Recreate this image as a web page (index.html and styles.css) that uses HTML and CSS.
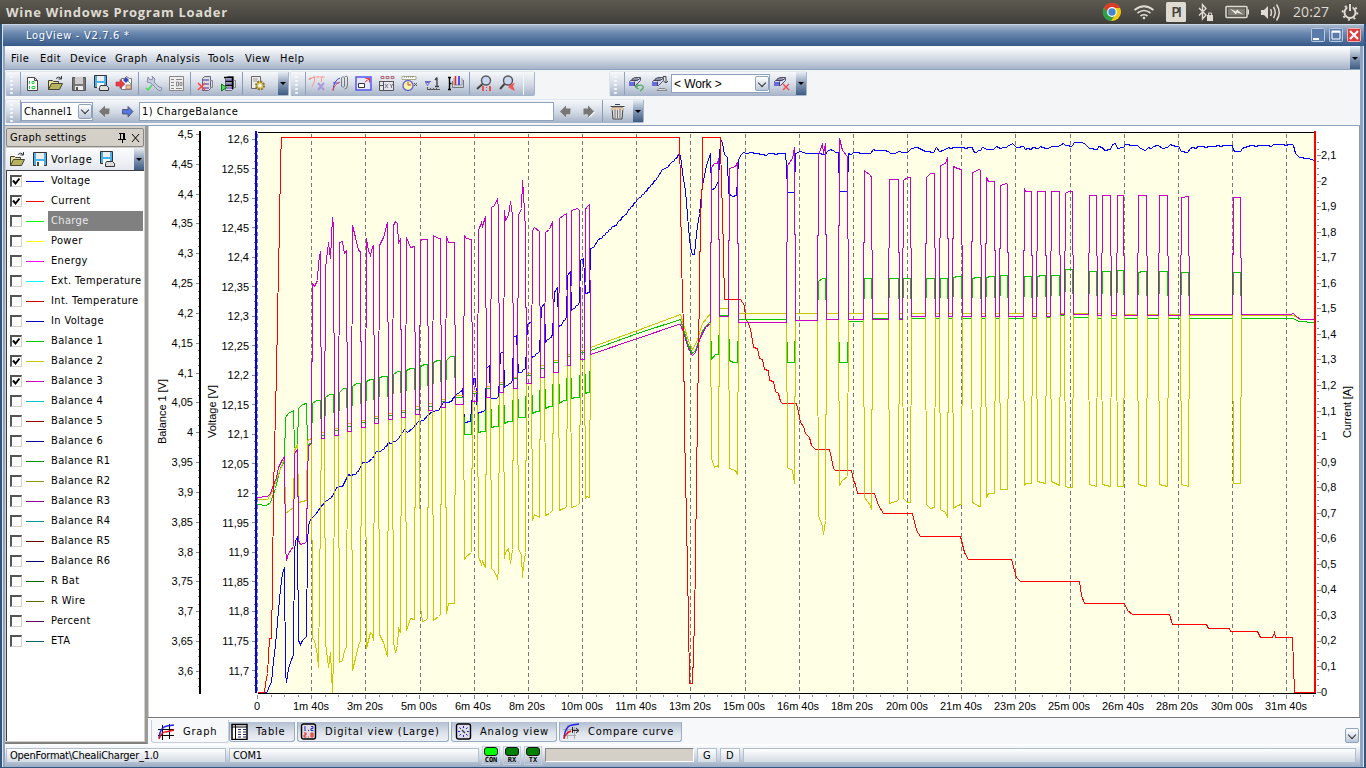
FILE: index.html
```html
<!DOCTYPE html>
<html lang="en">
<head>
<meta charset="utf-8">
<title>LogView</title>
<link rel="stylesheet" href="styles.css">
</head>
<body>
<svg class="defs" width="0" height="0">
  <symbol id="i-new" viewBox="0 0 17 17"><path d="M3.500 2.500h7l3 3v10h-10z" fill="#fff" stroke="#444"/><path d="M10.500 2.500v3h3" fill="none" stroke="#444"/><path d="M5.500 6v3M8 6.500h2v2h-2zM5.500 11v3M8 11.500h3v2h-3z" fill="none" stroke="#3c4"/></symbol>
  <symbol id="i-open" viewBox="0 0 17 17"><path d="M1.500 14.500v-9h4l1 1h5v2" fill="#e9dfa0" stroke="#443"/><path d="M1.500 14.500l3-6h11l-3 6z" fill="#b8b45e" stroke="#443"/><path d="M9 3.500q3-3 5 0M14.500 1v3h-3" fill="none" stroke="#333"/></symbol>
  <symbol id="i-saveg" viewBox="0 0 17 17"><path d="M2.500 2.500h13v13h-13z" fill="#777" stroke="#555"/><path d="M5 2h8v7H5z" fill="#ccc"/><path d="M5 11h8v4H5z" fill="#eee"/><path d="M6 12h2v3H6z" fill="#555"/></symbol>
  <symbol id="i-save" viewBox="0 0 17 17"><path d="M1.500 1.500h13v13h-13z" fill="#49b1ec" stroke="#333"/><path d="M4 2h8v6H4z" fill="#eee"/><path d="M4 10h8v5H4z" fill="#fff"/><path d="M5 11h2v4H5z" fill="#444"/></symbol>
  <symbol id="i-saveas" viewBox="0 0 17 17"><path d="M1.500 .5h12v12h-12z" fill="#49b1ec" stroke="#333"/><path d="M4 1h7v5H4z" fill="#eee"/><path d="M4 8h7v5H4z" fill="#fff"/><path d="M7.500 10.500h6l2 2v3h-9v-3z" fill="#ddd" stroke="#333"/></symbol>
  <symbol id="i-export" viewBox="0 0 17 17"><path d="M5.500 3.500h3l2-2 3 2h2v11h-10z" fill="#fff" stroke="#777"/><path d="M7 5l3-3 3 3-3 3z" fill="#3b46c0"/><path d="M10 10h5v4h-5z" fill="#e7c99b" stroke="#a77"/><path d="M12 6l3 3" stroke="#5b5"/><path d="M0 7h4V4.500l5 4.500-5 4.500V11H0z" fill="#ee3b4b" stroke="#a33" stroke-width=".6"/></symbol>
  <symbol id="i-tools" viewBox="0 0 17 17"><path d="M3 2l2 3 3-1-1-3 3 3-1 3 5 5 3 1-1 3-3-1-7-7-4-1z" fill="#c7cde2" stroke="#8890ad"/><path d="M1 13l2 2 4-5" fill="none" stroke="#4d5" stroke-width="1.500"/></symbol>
  <symbol id="i-form" viewBox="0 0 17 17"><path d="M1.500 1.500h14v14h-14z" fill="#eee" stroke="#888"/><path d="M3 4.500h3M3 7.500h3M3 10.500h3M3 13.500h3M8 4.500h6M8 13.500h6M8.500 7v4h2v-4zM12 7.500h2v3h-2z" fill="none" stroke="#888"/></symbol>
  <symbol id="i-stack" viewBox="0 0 17 17"><path d="M5.500 3.500l2-2h6v12l-2 2h-6z" fill="#ddd" stroke="#667"/><path d="M6 4h6v2H6zM6 8h6v2H6zM6 12h6v2H6z" fill="#8a84d0"/><path d="M13 5.500h2.500v7H13" fill="none" stroke="#888"/></symbol>
  <symbol id="i-del" viewBox="0 0 17 17"><use href="#i-stack"/><path d="M1 8l7 7M8 8l-7 7" stroke="#f44" stroke-width="1.500"/></symbol>
  <symbol id="i-play" viewBox="0 0 17 17"><use href="#i-stack"/><path d="M4 2.500h9M5.500 6.500h7M5.500 10.500h7M12.500 2v12" stroke="#000" stroke-width="1.500"/><path d="M1.500 9l5 3.500-5 3.500z" fill="#5d6" stroke="#171"/></symbol>
  <symbol id="i-gear" viewBox="0 0 17 17"><path d="M2.500 1.500h9v12h-9z" fill="#eee" stroke="#666"/><path d="M4 4h5M4 6h4" stroke="#999"/><circle cx="11" cy="10.500" r="4" fill="#dbc765" stroke="#88752c" stroke-dasharray="2 1.100" stroke-width="2"/><circle cx="11" cy="10.500" r="1.600" fill="#fff"/></symbol>
  <symbol id="i-curvex" viewBox="0 0 17 17"><path d="M0 4.500Q3 2 7 2h9" fill="none" stroke="#f76" stroke-width="1.200" stroke-dasharray="3 1"/><path d="M5.500 3v3L3 12M12.500 3v4" fill="none" stroke="#f98"/><path d="M9 8l6 7M15 8l-6 7" stroke="#a9d" stroke-width="2"/></symbol>
  <symbol id="i-clip" viewBox="0 0 17 17"><path d="M1 15Q2 5 8 3M1 8h6" fill="none" stroke="#44d"/><path d="M1 16Q2 9 8 7" fill="none" stroke="#e44"/><path d="M9.500 11V3q1.500-3 3 0v8q-1.500 3-3 0M12.500 2q3-2 3 1v7q0 4-3 4" fill="none" stroke="#777"/></symbol>
  <symbol id="i-zoomr" viewBox="0 0 17 17"><path d="M1 2h15v13H1z" fill="#e4e7f8" stroke="#55e" stroke-width="1.500"/><path d="M3.500 8.500h6v4h-6z" fill="#fff" stroke="#333"/><path d="M10 7l4-3M10.500 3.500h4v4" fill="none" stroke="#e33"/></symbol>
  <symbol id="i-xy" viewBox="0 0 17 17"><path d="M1.500 6v9.500h14V6M1 6.500h15M5.500 6v9M1 10.500h4" fill="#e4e7f2" stroke="#555"/><path d="M3 1.500h3v2H3zM8 1.500h3v2H8zM13 1.500h3v2h-3z" fill="none" stroke="#a67"/><path d="M7 9l3 4m0-4l-3 4m5-4l1.500 2L15 9m-1.500 2v2" stroke="#777" fill="none"/></symbol>
  <symbol id="i-clock" viewBox="0 0 17 17"><path d="M1 1.500h14v3H1z" fill="#fff" stroke="#aa8"/><path d="M3 2h10" stroke="#777" stroke-dasharray="1 1"/><circle cx="7" cy="10.500" r="5" fill="#fff7a8" stroke="#66c" stroke-width="1.400"/><path d="M7 7v3h3" fill="none" stroke="#e33"/><path d="M13 8l3 3m0-3l-3 3" stroke="#555"/></symbol>
  <symbol id="i-int" viewBox="0 0 17 17"><path d="M13 2.500v9M11 5l2-2.500M11 11.500h4" fill="none" stroke="#444" stroke-width="1.400"/><path d="M1 6.500h6M1.500 7.500l2 3 2-3z" fill="none" stroke="#66c"/><path d="M3 14.500h13M3.500 12v3M6.500 13v2M9.500 13v2M12.500 13v2" stroke="#555"/></symbol>
  <symbol id="i-axes" viewBox="0 0 17 17"><path d="M2.500 2v13M1 2.500h3M1 14.500h3M2.500 8.500h2" stroke="#000" stroke-width="1.400"/><path d="M5.500 6v6.500h11V5" fill="none" stroke="#777"/><path d="M7 3v7h8V3" fill="none" stroke="#999"/><path d="M8.500 1v9" stroke="#e22" stroke-width="1.500"/><path d="M12 1v9" stroke="#22e" stroke-width="1.500"/></symbol>
  <symbol id="i-mag1" viewBox="0 0 17 17"><circle cx="10" cy="5.500" r="4.500" fill="#c9d7f2" stroke="#555" stroke-width="1.400"/><path d="M6.500 9L1 14" stroke="#444" stroke-width="2"/><path d="M7 11v5M14 11v5" stroke="#e33" stroke-width="1.600"/><path d="M10.500 12v1m0 2v1" stroke="#e33"/></symbol>
  <symbol id="i-mag2" viewBox="0 0 17 17"><circle cx="9" cy="5.500" r="4.500" fill="#c9d7f2" stroke="#555" stroke-width="1.400"/><path d="M5.500 9L1 14" stroke="#444" stroke-width="2"/><path d="M9 12l3-3 4-1-2 3 2 5-4-2z" fill="#e55"/></symbol>
  <symbol id="i-db" viewBox="0 0 17 17"><path d="M1.500 6.500l5-4h6v3l-5 5h-6z" fill="#d7daf4" stroke="#556"/><path d="M1 7h5v4H1z" fill="#6a6ae0"/><path d="M3 5.500h6l3-2M6.500 10.500v-4M4 4h6" fill="none" stroke="#445"/></symbol>
  <symbol id="i-dbundo" viewBox="0 0 17 17"><use href="#i-db"/><path d="M8 12q2-2 5-2 3 1 2 3-1 2-3 3M10.500 9.500l-3 2.500 3 2" fill="none" stroke="#4a5" stroke-width="1.200"/></symbol>
  <symbol id="i-dbsave" viewBox="0 0 17 17"><use href="#i-db"/><path d="M12 1.500h3v6M12.500 6l2.500 2 2-2" fill="none" stroke="#444"/><path d="M6 15.500l2-2h6l2 2z" fill="#ddd" stroke="#888"/></symbol>
  <symbol id="i-dbdel" viewBox="0 0 17 17"><use href="#i-db"/><path d="M10 9l6 6M16 9l-6 6" stroke="#f44" stroke-width="1.300"/></symbol>
  <symbol id="i-left" viewBox="0 0 17 17"><path d="M4 9.500l5-5v3h5v4.500H9v3z" fill="#fff"/><path d="M3 8.500l6-6v3h4.500v6H9v3z" fill="#777"/></symbol>
  <symbol id="i-right" viewBox="0 0 17 17"><path d="M15 9.500l-6-5v3H5v4.500h4v3z" fill="#fff"/><path d="M14 8.500l-6-6v3H3.500v6H8v3z" fill="#777"/></symbol>
  <symbol id="i-rightb" viewBox="0 0 17 17"><path d="M14 8.500L9 3.500v3H3.500v4.500H9v3z" fill="#5577dd" stroke="#446" stroke-width=".8"/></symbol>
  <symbol id="i-trash" viewBox="0 0 17 17"><path d="M3 5h11l-1 11H4z" fill="#ddd" stroke="#444"/><path d="M1.500 3.500h14M6 1.500h5" stroke="#444" stroke-width="1.200"/><path d="M6 6v9M8.500 6v9M11 6v9" stroke="#777"/><path d="M2 5q7-1 13 0l-1 2.500-3-2-3 2-2-1.500-3 1.500z" fill="#ecc99a"/></symbol>
  <symbol id="t-graph" viewBox="0 0 17 17"><path d="M4.500 2v15M11.500 1v15M0 6.500h16M0 12.500h16" stroke="#000"/><path d="M1 15Q2 4 9 3l7-1" fill="none" stroke="#22e" stroke-width="1.400"/><path d="M1 16Q4 8 8 9l8-2" fill="none" stroke="#e11" stroke-width="1.400"/></symbol>
  <symbol id="t-table" viewBox="0 0 17 17"><path d="M1 1.500h15v15H1z" fill="#fff" stroke="#000" stroke-width="1.500"/><path d="M1 4h15M4.500 2v14" stroke="#000"/><path d="M7 6.500h3M12 6.500h3M7 9h3M12 9h3M7 11.500h3M12 11.500h3M7 14h3M12 14h3" stroke="#226"/></symbol>
  <symbol id="t-digi" viewBox="0 0 17 17"><rect x="1.500" y="1" width="14" height="15" rx="2" fill="#ddd" stroke="#000" stroke-width="1.400"/><path d="M5 3v5M11 3.500h2v2h-2v2h2.500M8 7.500h1" fill="none" stroke="#22d"/><path d="M4 10h2v2H4v2h2.500M11 10h2v4h-2zM11 12h2M8 14h1" fill="none" stroke="#e22"/></symbol>
  <symbol id="t-ana" viewBox="0 0 17 17"><rect x="1.500" y="1" width="14" height="15" rx="2" fill="#dde" stroke="#000" stroke-width="1.400"/><path d="M8.500 3v2M8.500 12v2M3 8.500h2M12 8.500h2M4.500 4.500l1.500 1.500M11 11l1.500 1.500M12.500 4.500L11 6M4.500 12.500L6 11" stroke="#22d"/><path d="M7 7l3 3" stroke="#444" stroke-width="1.500"/></symbol>
  <symbol id="t-comp" viewBox="0 0 17 17"><path d="M4.500 2v14M11.500 4v12M0 6.500h15M0 12.500h13" stroke="#aaa"/><path d="M1 15Q2 3 9 2l7-1" fill="none" stroke="#22e" stroke-width="1.400"/><path d="M1 16Q2 10 8 8" fill="none" stroke="#e11" stroke-width="1.400"/><path d="M9 7.500h6M13 5l3 2.500-3 2.500M9.500 4v6" fill="none" stroke="#222"/></symbol>
</svg>

<header class="topbar">
  <span class="topbar-title">Wine Windows Program Loader</span>
  <svg class="tray" width="266" height="24" viewBox="1100 0 266 24">
    <circle cx="1112" cy="12" r="9" fill="#f2c811"/><path d="M1104 8a9 9 0 0 1 16 0h-8l-4 6z" fill="#dd3b2a"/><path d="M1104 7.500a9 9 0 0 0 7 13.500l4-6-5 1z" fill="#2da04a"/><circle cx="1112" cy="12" r="4.300" fill="#4286cf" stroke="#fff" stroke-width="1.200"/>
    <g fill="none" stroke="#dfdbd2" stroke-width="1.700"><path d="M1134.500 10q9.500-7.500 19 0M1137.500 13q6.500-5 13 0M1140.500 16q3.500-2.500 7 0"/></g><circle cx="1144" cy="18" r="1.300" fill="#dfdbd2"/>
    <rect x="1166" y="2" width="20" height="20" rx="1.500" fill="#dfdbd2"/><text x="1171.500" y="17" class="tray-lang" textLength="10">Pl</text>
    <path d="M1199 8l7 7-3.500 4V4.500l3.500 4-7 7" fill="none" stroke="#dfdbd2" stroke-width="1.400"/><path d="M1207 15h6v6h-6z" fill="#dfdbd2"/><path d="M1208.500 15v-2h3v2" fill="none" stroke="#dfdbd2"/>
    <rect x="1226" y="6.500" width="21" height="11" rx="1" fill="none" stroke="#dfdbd2" stroke-width="1.500"/><rect x="1228" y="8.500" width="17" height="7" fill="#817e76"/><path d="M1247.500 9.500h1.500v5h-1.500z" fill="#dfdbd2"/><path d="M1230 8.500l6 3 1-2 6 5-6-2-1 2z" fill="#efece4"/>
    <path d="M1261 10h3l4-4v13l-4-4h-3z" fill="#dfdbd2"/><path d="M1270.500 9q2 3.500 0 7M1273.500 7q3.500 5.500 0 11M1276.500 4.500q5.500 8 0 16" fill="none" stroke="#dfdbd2" stroke-width="1.500"/>
    <text x="1293" y="17" class="tray-clock" textLength="36">20:27</text>
    <circle cx="1350" cy="12.500" r="5.500" fill="none" stroke="#dfdbd2" stroke-width="2"/><circle cx="1350" cy="12.500" r="7.300" fill="none" stroke="#dfdbd2" stroke-width="2" stroke-dasharray="2 3.730"/><path d="M1347.500 3h5v8h-5z" fill="#4d4a43"/><path d="M1350 4v7" stroke="#dfdbd2" stroke-width="2"/>
  </svg>
</header>

<main class="window">
  <div class="titlebar"><span>LogView - V2.7.6 *</span>
    <svg width="52" height="17" viewBox="0 0 52 17"><g stroke="#b9c8dd"><rect x=".5" y="1.500" width="13" height="13" rx="1" fill="#5b7cab"/><rect x="18.500" y="1.500" width="13" height="13" rx="1" fill="#5b7cab"/><rect x="36.500" y="1.500" width="13" height="13" rx="1" fill="#dc3b3b" stroke="#f3b2b2"/></g><path d="M2 11h6v2H2z" fill="#fff"/><path d="M21 5h8v7h-8z" fill="none" stroke="#fff"/><path d="M20.500 4.500h9" stroke="#fff" stroke-width="2"/><path d="M39 4l8 8M47 4l-8 8" stroke="#fff" stroke-width="2.200"/></svg>
  </div>
  <nav class="menubar">
    <span class="m1">File</span><span class="m2">Edit</span><span class="m3">Device</span><span class="m4">Graph</span><span class="m5">Analysis</span><span class="m6">Tools</span><span class="m7">View</span><span class="m8">Help</span>
    <i class="drop menu-drop"></i>
  </nav>
  <div class="toolrow">
    <div class="bar"><i class="grip"></i><svg class="ic"><use href="#i-new"/></svg><svg class="ic"><use href="#i-open"/></svg><svg class="ic"><use href="#i-saveg"/></svg><svg class="ic"><use href="#i-saveas"/></svg><svg class="ic"><use href="#i-export"/></svg><i class="sep"></i><svg class="ic"><use href="#i-tools"/></svg><svg class="ic"><use href="#i-form"/></svg><i class="sep"></i><svg class="ic"><use href="#i-del"/></svg><svg class="ic"><use href="#i-play"/></svg><i class="sep"></i><svg class="ic"><use href="#i-gear"/></svg><i class="drop"></i></div>
    <div class="bar bar-graph"><i class="grip"></i><svg class="ic"><use href="#i-curvex"/></svg><svg class="ic"><use href="#i-clip"/></svg><svg class="ic"><use href="#i-zoomr"/></svg><svg class="ic"><use href="#i-xy"/></svg><svg class="ic"><use href="#i-clock"/></svg><svg class="ic"><use href="#i-int"/></svg><svg class="ic"><use href="#i-axes"/></svg><i class="sep"></i><svg class="ic"><use href="#i-mag1"/></svg><svg class="ic"><use href="#i-mag2"/></svg><i class="endcap"></i></div>
    <div class="bar bar-work"><i class="grip"></i><svg class="ic"><use href="#i-dbundo"/></svg><svg class="ic"><use href="#i-dbsave"/></svg><div class="combo work"><span>&lt; Work &gt;</span><i class="chev"></i></div><svg class="ic"><use href="#i-dbdel"/></svg><i class="drop"></i></div>
  </div>
  <div class="toolrow second">
    <div class="bar"><i class="grip"></i><div class="combo channel"><span>Channel1</span><i class="chev"></i></div><svg class="ic"><use href="#i-left"/></svg><svg class="ic"><use href="#i-rightb"/></svg><div class="field">1) ChargeBalance</div><svg class="ic"><use href="#i-left"/></svg><svg class="ic"><use href="#i-right"/></svg><i class="sep"></i><svg class="ic"><use href="#i-trash"/></svg><i class="drop"></i></div>
  </div>
  <div class="work-area">
    <aside class="sidebar">
      <div class="side-head"><span>Graph settings</span><svg width="24" height="12" viewBox="0 0 24 12"><path d="M2 1.500h6M3.500 1v6M6.500 1v6M7.500 1v6M1 7.500h8M5.500 7v4" stroke="#000" fill="none"/><path d="M15 2l7 8M22 2l-7 8" stroke="#000"/></svg></div>
      <div class="side-tools"><svg class="ic"><use href="#i-open"/></svg><svg class="ic"><use href="#i-save"/></svg><span>Vorlage</span><svg class="ic"><use href="#i-saveas"/></svg><i class="drop"></i></div>
      <ul class="series" id="series"></ul>
    </aside>
    <section class="content">
      <svg id="chart" width="1212" height="591" viewBox="148 126 1212 591"></svg>
      <div class="tabs">
        <div class="tab active"><svg><use href="#t-graph"/></svg><span>Graph</span></div>
        <div class="tab t2"><svg><use href="#t-table"/></svg><span>Table</span></div>
        <div class="tab t3"><svg><use href="#t-digi"/></svg><span>Digital view (Large)</span></div>
        <div class="tab t4"><svg><use href="#t-ana"/></svg><span>Analog view</span></div>
        <div class="tab t5"><svg><use href="#t-comp"/></svg><span>Compare curve</span></div>
        <i class="chev tab-more"></i>
      </div>
    </section>
  </div>
  <footer class="status">
    <span class="pane p1">OpenFormat\ChealiCharger_1.0</span><span class="pane p2">COM1</span>
    <span class="led on"><b></b>CON</span><span class="led"><b></b>RX</span><span class="led"><b></b>TX</span>
    <span class="gauge"></span><span class="pane p3">G</span><span class="pane p3">D</span><span class="pane rest"></span>
  </footer>
</main>
<script src="chart.js"></script>
</body>
</html>
```

FILE: styles.css
```css
* { box-sizing: border-box; }
body { margin: 0; width: 1366px; height: 768px; overflow: hidden; font: 11px "DejaVu Sans Condensed", "DejaVu Sans", sans-serif; font-stretch: condensed; color: #000; letter-spacing: .15px; }
.defs { position: absolute; }
.topbar { height: 24px; background: linear-gradient(#5c5a50, #403e39); display: flex; align-items: center; justify-content: space-between; }
.topbar-title { padding-left: 6px; font: bold 13px/23px "Open Sans", sans-serif; color: #dfdbd2; letter-spacing: .7px; white-space: nowrap; }
.tray { flex: none; }
.tray-lang { font: bold 13px Lato, sans-serif; fill: #45433d; letter-spacing: 0; }
.tray-clock { font: 14px "Open Sans", sans-serif; fill: #dfdbd2; letter-spacing: 0; }

.window { height: 744px; display: flex; flex-direction: column; background: #f4f5f7; border-left: 2px solid #34557f; border-right: 2px solid #34557f; border-bottom: 1px solid #34557f; padding: 0 4px 0 3px; box-shadow: inset 1px 0 #dce5f0, inset 3px 0 #8fa5c3, inset -1px 0 #dce5f0, inset -4px 0 #8fa5c3; }
.titlebar { height: 22px; flex: none; margin: 0 -4px 1px -2px; padding: 0 1px 0 23px; border-top: 1px solid #c9d6e6; background: linear-gradient(#a9bacf, #6e8cb2 35%, #37598a); color: #fff; display: flex; align-items: center; justify-content: space-between; letter-spacing: .7px; }
.titlebar span { text-shadow: 1px 1px #37598a; }
.menubar { height: 23px; flex: none; padding: 0 0 0 6px; background: linear-gradient(#fdfdfe, #cdd5e1 60%, #a5b3c8); border-bottom: 1px solid #8fa2bd; display: flex; align-items: center; letter-spacing: .45px; }
.menubar span { flex: none; padding-top: 1px; }
.m1 { width: 29px; } .m2 { width: 30px; } .m3 { width: 45px; } .m4 { width: 41px; } .m5 { width: 52px; } .m6 { width: 37px; } .m7 { width: 35px; }
.menu-drop { margin-left: auto; }
.toolrow { display: flex; height: 26px; margin-top: 1px; flex: none; }
.toolrow.second { height: 26px; margin-top: 2px; }
.bar { height: 25px; display: flex; align-items: center; border: 1px solid #a5b4ca; border-left-color: #dde3ec; border-top-color: #e2e7ee; border-radius: 2px; background: linear-gradient(#f6f8fb, #d3dae5 55%, #a9b6ca); flex: none; }
.second .bar { height: 24px; }
.grip { width: 15px; height: 100%; border-right: 1px solid #8fa2bd; background: radial-gradient(circle, #f6f8fb 1px, transparent 1.500px) 3px 3px / 5px 4px repeat-y; flex: none; }
.ic { width: 23px; height: 17px; flex: none; }
.sep { width: 1px; height: 100%; margin: 0 3px 0 2px; border-left: 1px solid #8a9bb8; flex: none; }
.drop { width: 10px; align-self: stretch; background: linear-gradient(#e8edf3, #8599b5 50%, #3f5c83); display: grid; place-items: center; flex: none; margin-left: auto; }
.drop::after { content: ""; border: 3px solid transparent; border-top: 3px solid #000; border-bottom: 0; }
.bar:first-child { width: 284px; }
.second .bar:first-child { width: 639px; }
.bar-graph { width: 245px; margin-left: 1px; }
.bar-work { width: 198px; margin-left: 74px; }
.endcap { width: 11px; height: 100%; border-left: 1px solid #f2f5f9; margin-left: auto; }
.combo, .field { background: #fff; border: 1px solid #8fa2bd; height: 19px; display: flex; align-items: center; padding-left: 2px; flex: none; white-space: nowrap; }
.chev { width: 14px; height: 15px; border: 1px solid #8fa2bd; border-radius: 2px; background: linear-gradient(#fff, #bcc8d8); margin-left: auto; display: grid; place-items: center; flex: none; }
.chev::after { content: ""; width: 5px; height: 5px; border: solid #333; border-width: 0 1px 1px 0; transform: translateY(-1px) rotate(45deg); }
.work { width: 99px; letter-spacing: -.1px; }
.work span { font: 12px "Liberation Sans", sans-serif; }
.channel { width: 72px; letter-spacing: .2px; }
.field { width: 415px; letter-spacing: .5px; }

.work-area { display: flex; height: 619px; flex: none; border-top: 1px solid #8fa2bd; }
.sidebar { width: 143px; flex: none; background: #d4d0c8; border-right: 3px solid #999; padding: 2px 1px 1px 1px; display: flex; flex-direction: column; border-bottom: 2px solid #808080; }
.side-head { height: 19px; border: 1px solid #888; border-radius: 2px; display: flex; align-items: center; justify-content: space-between; padding: 0 2px 0 3px; letter-spacing: .25px; }
.side-tools { height: 22px; margin-top: 1px; background: linear-gradient(#fbfcfd, #e5e9ef); display: flex; align-items: center; }
.side-tools span { padding: 0 4px 0 0; margin-left: -1px; letter-spacing: .6px; }
.series { list-style: none; margin: 0; padding: 0 1px 0 0; flex: 1; background: #fff; border-top: 1px solid #404040; border-left: 1px solid #404040; letter-spacing: .35px; }
.series li { height: 20px; display: flex; align-items: center; }
.box { width: 12px; height: 12px; margin: -1px 0 0 3px; border: solid; border-width: 2px 1px 1px 2px; border-color: #555 #d4d0c8 #d4d0c8 #555; flex: none; }
.check { display: block; }
.swatch { width: 18px; height: 1px; margin-left: 4px; flex: none; }
.series .name { margin-left: 4px; height: 20px; line-height: 20px; padding-left: 3px; flex: 1; white-space: nowrap; }
.selected .name { background: #808080; color: #e8e8e8; }

.content { width: 1212px; background: #fff; display: flex; flex-direction: column; flex: none; }
#chart { display: block; flex: none; }
.axis { font: 11px "Liberation Sans", sans-serif; letter-spacing: 0; }
.tabs { height: 27px; background: #f7f8fa; border-top: 1px solid #777; display: flex; align-items: flex-start; padding: 4px 0 0 3px; gap: 2px; }
.tab { height: 20px; border: 1px solid #9aabc4; border-top: 0; border-radius: 0 0 3px 3px; background: linear-gradient(#b3c0d2, #dfe4ec 60%, #eceff4); display: flex; align-items: center; flex: none; white-space: nowrap; letter-spacing: .8px; }
.tab svg { width: 17px; height: 17px; margin: 0 8px 0 1px; }
.tab.active { width: 78px; height: 23px; margin: -2px -2px 0 0; background: #f7f8fa; border-color: #c6cfdb; }
.tab.active svg { margin-left: 6px; }
.t2 { width: 66px; } .t3 { width: 152px; letter-spacing: .9px; } .t4 { width: 106px; } .t5 { width: 123px; }
.tab.t3 svg { margin-left: 2px; } .tab.t4 svg, .tab.t5 svg { margin-left: 3px; }
.tab-more { margin-top: 6px; margin-right: 1px; }

.status { height: 23px; background: linear-gradient(#fff, #cdd5e1 60%, #9aabc4); display: flex; align-items: center; padding: 0 0 1px 1px; gap: 3px; letter-spacing: -.15px; flex: none; }
.pane { height: 15px; border: 1px solid #b2bfd0; background: linear-gradient(#fff, #d4dbe5); line-height: 14px; padding-left: 3px; flex: none; }
.p1 { width: 220px; letter-spacing: -.25px; } .p2 { width: 250px; } .p3 { width: 20px; padding-left: 5px; } .rest { width: 613px; }
.led { width: 18px; height: 19px; font: bold 7px/8px "DejaVu Sans Mono", monospace; text-align: center; letter-spacing: 0; flex: none; border: 1px solid #c3cddb; }
.led b { display: block; width: 14px; height: 9px; margin: 0 auto; border: 1px solid #111; border-radius: 3px; background: #008000; }
.led.on b { background: #00ff00; }
.gauge { width: 149px; height: 14px; background: #d4d0c8; border: 1px solid #888; border-right-color: #fff; border-bottom-color: #fff; flex: none; }
```

FILE: chart.js
```js
// Legend entries: name, colour, visible
const legend = [
  ['Voltage', '#0000ff', 1], ['Current', '#ff0000', 1], ['Charge', '#00ff00', 0], ['Power', '#ffff00', 0],
  ['Energy', '#ff00ff', 0], ['Ext. Temperature', '#00ffff', 0], ['Int. Temperature', '#c80000', 0], ['In Voltage', '#0000c8', 0],
  ['Balance 1', '#00c800', 1], ['Balance 2', '#c8c800', 1], ['Balance 3', '#c800c8', 1], ['Balance 4', '#00c8c8', 0],
  ['Balance 5', '#960000', 0], ['Balance 6', '#000096', 0], ['Balance R1', '#009600', 0], ['Balance R2', '#969600', 0],
  ['Balance R3', '#960096', 0], ['Balance R4', '#009696', 0], ['Balance R5', '#640000', 0], ['Balance R6', '#000064', 0],
  ['R Bat', '#006400', 0], ['R Wire', '#646400', 0], ['Percent', '#640064', 0], ['ETA', '#006464', 0]
];
document.getElementById('series').innerHTML = legend.map(([n, c, on]) =>
  `<li class="${n === 'Charge' ? 'selected' : ''}"><span class="box">${on ? '<svg class="check" width="9" height="9" viewBox="0 0 9 9"><path d="M1 3.500l2.500 3 4-5" fill="none" stroke="#000" stroke-width="2"/></svg>' : ''}</span><span class="swatch" style="background:${c}"></span><span class="name">${n}</span></li>`).join('');

const current = '257,692 264,692 265,683 267,673 269,638 271,638 272,583 273,493 275,410 276,372 278,267 279,230 280,160 281,137 679,137 680,190 681,260 683,330 684,430 686,520 688,620 689,683 692,683 694,620 695,560 696,480 699,287 700,217 702,180 702,137 720,137 720,147 722,213 723,253 724,299 740,299 742,302 744,305 745,317 747,322 749,325 751,334 753,347 757,348 759,358 762,359 764,369 768,370 769,380 773,381 775,391 778,393 780,401 782,403 796,403 798,412 800,422 803,426 805,433 809,437 811,445 815,449 829,449 831,458 833,468 835,470 851,470 853,480 855,484 857,493 874,493 878,505 883,513 912,513 916,530 920,536 960,536 964,552 968,559 1011,559 1016,577 1020,581 1079,581 1081,595 1084,603 1124,603 1127,610 1132,614 1169,614 1172,624 1206,624 1208,628 1229,628 1230,631 1257,631 1260,637 1272,637 1274,632 1275,637 1292,637 1294,692 1314,692';

const voltage = '257,692 267,691 269,685 271,682 273,660 275,645 278,610 280,588 282,573 284,567 285,672 286,682 288,668 290,662 293,654 294,550 295,541 297,536 298,640 300,644 302,640 306,636 307,543 308,525 310,519 315,514 320,507 324,502 333,494 336,487 342,486 348,474 355,474 362,462 367,462 372,458 376,451 380,451 388,442 395,441 398,438 404,429 407,432 412,428 418,421 423,420 427,415 432,411 438,410 443,402 448,402 455,395 462,388 464,422 470,421 473,378 475,378 477,413 485,409 486,368 489,365 490,398 498,396 500,353 503,351 504,387 512,380 513,337 516,335 518,372 525,368 527,324 531,321 531,357 539,351 541,307 544,303 545,342 552,333 554,292 557,287 558,326 566,317 567,275 570,271 571,310 579,302 580,260 583,258 585,293 589,292 590,248 593,247 598,239 617,222 637,199 657,177 662,169 667,167 670,163 678,154 680,155 682,172 685,190 688,227 690,247 692,254 694,254 696,233 699,213 702,185 706,165 710,153 711,190 715,187 718,180 720,138 722,143 724,154 727,157 728,193 732,196 736,195 738,160 740,155 743,152 746,153 752,152 760,154 770,153 785,153 786,165 787,192 794,192 795,153 800,151 806,153 817,153 825,154 827,151 830,149 838,152 839,191 847,191 848,153 855,152 870,153 873,149 882,150 895,153 898,151 903,152 907,152 911,148 917,147 923,150 933,152 936,147 939,151 943,150 948,147 960,147 972,147 973,151 980,150 982,147 987,149 993,149 996,146 1000,148 1003,147 1012,143 1016,147 1023,146 1025,149 1032,147 1038,148 1040,146 1047,148 1052,146 1058,146 1063,143 1065,145 1072,145 1074,142 1082,142 1085,144 1089,148 1097,149 1098,146 1102,147 1103,149 1110,149 1112,144 1115,143 1117,148 1123,147 1125,144 1137,145 1140,148 1145,150 1148,147 1158,145 1162,148 1167,147 1170,144 1178,146 1181,151 1187,152 1190,148 1197,146 1232,145 1233,150 1240,151 1242,148 1250,145 1292,144 1293,145 1295,153 1299,157 1308,158 1314,160';

// Balancing pulses: Balance 3 peak | Balance 1 | Balance 2 peak | rest level after the pulse (B3, B1, B2)
const pulses = `
312,283 314,286 317,280 318,262 320,251|403 400|638 640 655 667|438 435 432
325,268 328,242 330,258 332,217 333,225|397 394|642 667 652 692 657|435 430 428
339,242 342,241 344,253 346,250|392 388|662 660 650 647|431 426 423
352,225 355,237 358,250 360,251|386 383|670 658 645 640|427 422 420
366,238 368,250 370,255 372,246 373,245|381 379|648 640 632 634 640|423 418 416
379,245 383,237 387,222|377 376|634 642 656|419 415 413
393,225 395,221 397,223 398,243 400,238|374 371|642 652 645 628 632|417 412 410
406,237 410,247 414,246|370 368|630 618 619|414 409 406
420,240 422,239 427,239|366 364|607 621 619|410 406 403
433,235 438,238 440,238|362 360|620 616 614|407 401 399
446,236 448,242 454,242|360 356|613 603 603|404 397 395
464,235 466,238 471,239|434 434|559 556 552|401 393 391
478,230 481,222 482,226 485,216|432 431|556 564 561 567|397 388 386
491,207 494,205 497,198 498,208|427 426|568 571 578 570|392 384 382
504,210 505,220 508,215 510,201 512,215|423 421|558 552 548 563 549|388 378 377
518,215 521,208 522,180 523,193 525,229|417 417|548 555 577 565 552|383 375 373
532,230 534,227 539,231|413 411|520 514 517|377 368 365
545,232 549,229 552,221|408 406|515 513 510|372 362 360
559,218 563,215 566,213|403 400|510 508 507|365 356 354
571,210 577,208 579,210|398 397|507 505 503|359 352 350
585,209 586,207 589,204|393 392|498 496 497|354 350 347`.trim();
const pulsesLate = `
711,167 714,163 717,163 718,158|359 354|458 467 465 467|316 315 308
729,168 735,166 737,162|360 362|468 470 474|322 319 313
787,165 792,158 794,147|362 362|467 470 483|320 320 313
818,155 822,143 823,153 825,143|281 278|515 526 534 520|319 319 313
839,138 842,150 847,156|362 362|485 480 476|319 321 313
864,170 870,175 871,177|278 278|497 505 509|319 318 313
889,179 898,179|278 278|503 500|319 318 313
903,180 907,177 910,177|278 278|498 502 502|316 318 313
926,177 930,173 934,173|278 278|504 508 507|316 318 313
940,165 945,163 947,157|278 278|509 512 517|316 318 313
953,166 957,168 961,169|277 276|508 505 504|316 318 313
972,172 979,169 980,170|278 277|502 506 506|316 318 313
986,177 988,181 994,181|277 276|497 493 493|316 318 313
1000,185 1006,183 1007,184|275 275|489 489 489|316 318 313
1024,188 1025,191 1031,191|276 276|485 483 483|316 318 313
1037,191 1045,191|276 275|481 483|316 317 313
1051,191 1059,191|275 275|481 485|314 315 313
1065,193 1068,191 1072,191|269 269|486 487 487|314 317 313
1089,195 1096,195|271 271|484 486|315 318 313
1102,195 1110,195|271 271|484 486|315 318 313
1117,195 1123,195|270 270|486 486|315 318 314
1138,195 1146,195|272 271|484 486|315 318 314
1159,195 1167,195|271 271|484 486|315 318 314
1181,197 1188,196|272 272|484 486|314 318 315
1233,197 1240,197|272 272|483 483|314 318 315`.trim();

function pulsed(kind, rows) {
  let out = '';
  rows.split('\n').forEach((row, i, all) => {
    const [m, g, y, rest] = row.split('|');
    const pts = m.split(' ').map(p => p.split(',').map(Number));
    const x0 = pts[0][0], x1 = pts[pts.length - 1][0], base = rest.split(' ').map(Number)[kind];
    let tops;
    if (kind === 0) tops = pts;
    else if (kind === 1) { const [a, b] = g.split(' '); tops = [[x0, a], [Math.round((x0 + x1) / 2), b], [x1, b]]; }
    else tops = y.split(' ').map((v, k) => [pts[Math.min(k, pts.length - 1)][0], v]);
    out += tops.map(p => p.join(',')).join(' ') + ` ${x1 + 1},${base} `;
    if (i < all.length - 1) out += `${+all[i + 1].split(',')[0] - 1},${base} `;
  });
  return out;
}
// Adds one-pixel measurement noise along the longer, flatter stretches
function noisy(str) {
  const pts = str.split(' ').map(p => p.split(',').map(Number)), out = [];
  pts.forEach(([x, y], i) => {
    out.push(`${x},${y}`);
    const n = pts[i + 1];
    if (!n || n[0] - x < 7) return;
    for (let k = x + 2; k < n[0] - 1; k += 3) {
      const v = Math.round(y + (n[1] - y) * (k - x) / (n[0] - x)) + ((k * 7) % 5 === 0 ? 1 : 0);
      out.push(`${k},${v}`, `${k + 1},${v}`);
    }
  });
  return out.join(' ');
}
const b3 = '257,497 267,496 270,493 272,487 276,477 278,467 282,459 284,456 285,547 286,560 288,553 293,546 294,453 297,449 298,540 300,544 306,542 307,477 308,445 311,444 ' + pulsed(0, pulses) +
  '637,338 678,324 680,324 683,332 688,348 692,355 695,352 700,337 705,327 710,323 ' + pulsed(0, pulsesLate) + '1290,314 1293,313 1296,316 1300,319 1314,319';
const b1 = '257,504 266,505 270,502 275,488 280,468 284,460 285,417 288,413 293,410 294,447 297,446 298,408 302,404 306,403 307,444 311,443 ' + pulsed(1, pulses) +
  '637,333 680,319 688,345 692,353 695,350 702,330 710,321 ' + pulsed(1, pulsesLate) + '1293,318 1298,321 1314,322';
const b2 = '257,499 267,499 272,491 276,479 284,458 285,513 293,507 294,450 297,444 298,502 306,500 307,440 311,438 ' + pulsed(2, pulses) +
  '637,330 680,314 688,340 692,349 696,342 702,323 710,313 ' + pulsed(2, pulsesLate) + '1293,315 1300,319 1314,319';

let s = '<rect x="148" y="126" width="1212" height="591" fill="#fff"/><rect x="257" y="132" width="1058" height="561" fill="#ffffe5"/>';
s += '<g shape-rendering="crispEdges" fill="none" transform="translate(.5 .5)">';
for (let i = 0; i < 20; i++) {
  const x = Math.round(257 + i * 54.17);
  s += `<path d="M${x} 133V692" stroke="#777" stroke-dasharray="4 3"/>`;
}
s += '<path d="M257 132H1315M257 693H1315" stroke="#000"/>';
[[noisy(voltage), '#0000ff'], [current, '#ff0000'], [b1, '#00c800'], [b2, '#c8c800'], [b3, '#c800c8']].forEach(([p, c]) => {
  s += `<polyline points="${p}" stroke="${c}"/>`;
});
s += `<polyline points="${current.split(' ').slice(0, 32).join(' ')}" stroke="#ff0000"/>`;
const tick = (x, y, len) => `<path d="M${x} ${y}h${len}" stroke="#888"/>`;
for (let i = 0; i < 75; i++) {
  s += tick(i % 4 ? 197 : 195, Math.round(134 + i * 7.458), i % 4 ? 2 : 4);
  if (138 + i * 7.383 < 692) s += tick(i % 4 ? 253 : 251, Math.round(138.5 + i * 7.383), i % 4 ? 2 : 4);
}
for (let i = -2; i < 85; i++) s += tick(1316, Math.round(155 + i * 6.39), i % 4 ? 2 : 4);
for (let i = 0; i < 79; i++) s += `<path d="M${Math.round(257 + i * 13.54)} 694v${i % 4 ? 2 : 4}" stroke="#888"/>`;
s += '</g><path d="M199 131h2v563h-2z"/><path d="M255 131h2v562h-2z" fill="#00f"/><path d="M1314 131h2v562h-2z" fill="#f00"/><g class="axis">';
const num = v => String(+v.toFixed(2)).replace('.', ',');
for (let i = 0; i < 19; i++) {
  s += `<text x="193" y="${138 + Math.round(i * 29.83)}" text-anchor="end">${num(4.5 - i * .05)}</text>`;
  s += `<text x="249" y="${143 + Math.round(i * 29.53)}" text-anchor="end">${num(12.6 - i * .05)}</text>`;
}
for (let i = 0; i < 22; i++) s += `<text x="1321" y="${159 + Math.round(i * 25.55)}">${num(2.1 - i * .1)}</text>`;
for (let i = 0; i < 20; i++) {
  const sec = i * 100, label = i ? `${Math.floor(sec / 60)}m ${String(sec % 60).padStart(2, '0')}s` : '0';
  s += `<text x="${Math.round(256.500 + i * 54.17)}" y="710" text-anchor="middle">${label}</text>`;
}
s += '<text transform="translate(166 444) rotate(-90)" textLength="65">Balance 1 [V]</text><text transform="translate(216 438) rotate(-90)" textLength="53">Voltage [V]</text><text transform="translate(1351 438) rotate(-90)" textLength="52">Current [A]</text></g>';
s += '<path d="M1359.500 126v591" stroke="#999"/><path d="M148 126v591" stroke="#8fa2bd"/>';
document.getElementById('chart').innerHTML = s;
```
